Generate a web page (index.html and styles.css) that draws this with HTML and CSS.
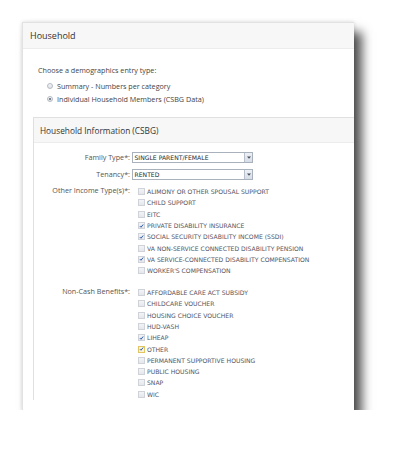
FILE: index.html
```html
<!DOCTYPE html>
<html lang="en">
<head>
    <meta charset="UTF-8">
    <meta name="viewport" content="width=device-width, initial-scale=1.0">
    <title>Household</title>
    <link rel="stylesheet" href="styles.css">
</head>
<body>
    <!-- Window -->
    <div class="window">
        <div class="panel-heading">Household</div>

        <div class="panel-body">
            <!-- Entry Type -->
            <div class="entry-type">
                <p class="prompt">Choose a demographics entry type:</p>
                <label class="radio"><span class="radio-dot"></span>Summary - Numbers per category</label>
                <label class="radio"><span class="radio-dot checked"></span>Individual Household Members (CSBG Data)</label>
            </div>

            <!-- Household Information -->
            <div class="sub-panel">
                <div class="sub-heading">Household Information (CSBG)</div>
                <div class="sub-body">
                    <div class="form-row">
                        <span class="field-label">Family Type*:</span>
                        <div class="select">
                            <span class="select-value">SINGLE PARENT/FEMALE</span>
                            <span class="select-btn"><svg width="4" height="3" viewBox="0 0 4 3"><path d="M0 0.5 L4 0.5 L2 2.8 Z" fill="#4a4f58"/></svg></span>
                        </div>
                    </div>
                    <div class="form-row">
                        <span class="field-label">Tenancy*:</span>
                        <div class="select">
                            <span class="select-value">RENTED</span>
                            <span class="select-btn"><svg width="4" height="3" viewBox="0 0 4 3"><path d="M0 0.5 L4 0.5 L2 2.8 Z" fill="#4a4f58"/></svg></span>
                        </div>
                    </div>

                    <div class="form-row list-row">
                        <span class="field-label">Other Income Type(s)*:</span>
                        <ul class="checklist">
                            <li><span class="cb"></span>ALIMONY OR OTHER SPOUSAL SUPPORT</li>
                            <li><span class="cb"></span>CHILD SUPPORT</li>
                            <li><span class="cb"></span>EITC</li>
                            <li><span class="cb"><svg width="6" height="6" viewBox="0 0 6 6"><path d="M1 3.1 L2.4 4.5 L5 1.2" fill="none" stroke="#2b5cae" stroke-width="1.2"/></svg></span>PRIVATE DISABILITY INSURANCE</li>
                            <li><span class="cb"><svg width="6" height="6" viewBox="0 0 6 6"><path d="M1 3.1 L2.4 4.5 L5 1.2" fill="none" stroke="#2b5cae" stroke-width="1.2"/></svg></span>SOCIAL SECURITY DISABILITY INCOME (SSDI)</li>
                            <li><span class="cb"></span>VA NON-SERVICE CONNECTED DISABILITY PENSION</li>
                            <li><span class="cb"><svg width="6" height="6" viewBox="0 0 6 6"><path d="M1 3.1 L2.4 4.5 L5 1.2" fill="none" stroke="#2b5cae" stroke-width="1.2"/></svg></span>VA SERVICE-CONNECTED DISABILITY COMPENSATION</li>
                            <li><span class="cb"></span>WORKER'S COMPENSATION</li>
                        </ul>
                    </div>

                    <div class="form-row list-row">
                        <span class="field-label">Non-Cash Benefits*:</span>
                        <ul class="checklist">
                            <li><span class="cb"></span>AFFORDABLE CARE ACT SUBSIDY</li>
                            <li><span class="cb"></span>CHILDCARE VOUCHER</li>
                            <li><span class="cb"></span>HOUSING CHOICE VOUCHER</li>
                            <li><span class="cb"></span>HUD-VASH</li>
                            <li><span class="cb"><svg width="6" height="6" viewBox="0 0 6 6"><path d="M1 3.1 L2.4 4.5 L5 1.2" fill="none" stroke="#2b5cae" stroke-width="1.2"/></svg></span>LIHEAP</li>
                            <li><span class="cb focus"><svg width="6" height="6" viewBox="0 0 6 6"><path d="M1 3.1 L2.4 4.5 L5 1.2" fill="none" stroke="#2b5cae" stroke-width="1.2"/></svg></span>OTHER</li>
                            <li><span class="cb"></span>PERMANENT SUPPORTIVE HOUSING</li>
                            <li><span class="cb"></span>PUBLIC HOUSING</li>
                            <li><span class="cb"></span>SNAP</li>
                            <li><span class="cb"></span>WIC</li>
                        </ul>
                    </div>
                </div>
            </div>
        </div>
    </div>
</body>
</html>
```

FILE: styles.css
```css
/* General Styles */
* {
    margin: 0;
    padding: 0;
    box-sizing: border-box;
}

body {
    background: #fff;
    font-family: 'Open Sans', 'Liberation Sans', sans-serif;
    color: #444;
    padding: 22px 0 0 22px;
}

/* Window with drop shadow */
.window {
    width: 332px;
    height: 388px;
    overflow: hidden;
    background: #fff;
    border: 1px solid #e2e2e2;
    border-right: none;
    border-bottom: none;
    box-shadow: 0 0 4px rgba(0, 0, 0, 0.15), 8px 10px 10px rgba(0, 0, 0, 0.68);
}

.panel-heading {
    height: 26px;
    padding-left: 7px;
    background: #f7f7f7;
    border-bottom: 1px solid #ececec;
    font-size: 9px;
    line-height: 26px;
    color: #333;
}

.panel-body {
    padding: 16px 0 0 10px;
}

/* Entry type */
.entry-type {
    padding-left: 5px;
    font-size: 7.2px;
    color: #444;
}

.prompt {
    line-height: 10px;
    margin-bottom: 4.5px;
}

.radio {
    display: flex;
    align-items: center;
    height: 13px;
    padding-left: 9px;
}

.radio-dot {
    width: 6px;
    height: 6px;
    margin-right: 4px;
    border: 1px solid #b4bac2;
    border-radius: 50%;
    background: linear-gradient(#f4f5f7, #dfe3e8);
    position: relative;
}

.radio-dot.checked::after {
    content: '';
    position: absolute;
    left: 1px;
    top: 1px;
    width: 2px;
    height: 2px;
    border-radius: 50%;
    background: #5a6270;
}

/* Household Information */
.sub-panel {
    width: 340px;
    margin-top: 11.5px;
    border: 1px solid #e0e0e0;
    border-bottom: none;
}

.sub-heading {
    height: 25px;
    padding-left: 6px;
    background: #f7f7f7;
    border-bottom: 1px solid #ececec;
    font-size: 8.3px;
    line-height: 25px;
    color: #333;
}

.sub-body {
    padding-top: 9px;
}

.form-row {
    display: grid;
    grid-template-columns: 96px auto;
    column-gap: 2px;
    align-items: center;
    margin-bottom: 6px;
}

.field-label {
    text-align: right;
    font-size: 7.2px;
    line-height: 9px;
    color: #555;
}

.select {
    display: flex;
    width: 121px;
    height: 11px;
    border: 1px solid #a9b1bd;
    background: #fff;
}

.select-value {
    flex: 1;
    padding-left: 1.5px;
    font-family: 'DejaVu Sans', sans-serif;
    font-size: 6.1px;
    line-height: 9px;
    color: #2a2a2a;
}

.select-btn {
    width: 8px;
    display: flex;
    align-items: center;
    justify-content: center;
    border-left: 1px solid #b7c0cc;
    background: linear-gradient(#edf1f6, #d6dde7);
}

/* Checkbox lists */
.list-row {
    align-items: start;
    margin-top: 1.5px;
    margin-bottom: 10.5px;
}

.checklist {
    list-style: none;
    padding-left: 5.5px;
}

.checklist li {
    display: flex;
    align-items: center;
    height: 11.3px;
    font-family: 'DejaVu Sans', sans-serif;
    font-size: 6.1px;
    color: #55555f;
    white-space: nowrap;
}

.cb {
    width: 7px;
    height: 7px;
    margin-right: 2.5px;
    flex-shrink: 0;
    display: flex;
    align-items: center;
    justify-content: center;
    border: 1px solid #cfd3d9;
    background: linear-gradient(#f3f4f6, #e4e7eb);
}

.cb.focus {
    border-color: #e3c463;
    background: #fbf4dc;
}
```
